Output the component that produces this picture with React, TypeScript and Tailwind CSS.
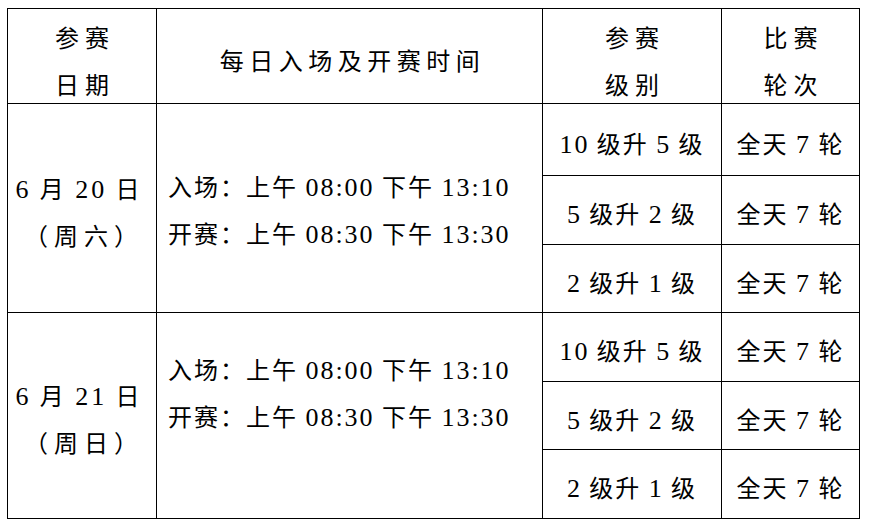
import { ReactNode } from "react";

const days = [
    { date: "6 月 20 日", week: "（周六）", shift: "pb-[0px]" },
    { date: "6 月 21 日", week: "（周日）", shift: "pb-[49px]" },
];

const levels = ["10 级升 5 级", "5 级升 2 级", "2 级升 1 级"];

// digits in Times-like face, a bit larger than the CJK text
function fmt(s: string) {
    return s.split(/([0-9:]+)/).map((part, i) =>
        /^[0-9:]+$/.test(part) ? (
            <span key={i} className="text-[26px] leading-none" style={{ fontFamily: '"Liberation Serif", serif' }}>
                {part}
            </span>
        ) : (
            <span key={i}>{part}</span>
        )
    );
}

function Cell({ children, className = "" }: { children: ReactNode; className?: string }) {
    return <div className={"bg-white flex flex-col justify-center " + className}>{children}</div>;
}

export default function App() {
    return (
        <div
            className="w-[869px] h-[526px] bg-white text-black pl-[7px] pt-[8px]"
            style={{ fontFamily: '"Noto Sans CJK SC", "Liberation Serif", serif' }}
        >
            <div className="inline-grid bg-black gap-px p-px grid-cols-[148px_385px_178px_137px] grid-rows-[94px_71px_68px_67px_68px_67px_68px] text-[24px] leading-[47px]">
                {/* header */}
                <Cell className="items-center pt-[7px] tracking-[6px] pl-[6px]">
                    <div>参赛</div>
                    <div>日期</div>
                </Cell>
                <Cell className="items-center pt-[7px] tracking-[5.5px] pl-[6px]">
                    <div>每日入场及开赛时间</div>
                </Cell>
                <Cell className="items-center pt-[7px] tracking-[6px] pl-[6px]">
                    <div>参赛</div>
                    <div>级别</div>
                </Cell>
                <Cell className="items-center pt-[7px] tracking-[6px] pl-[6px]">
                    <div>比赛</div>
                    <div>轮次</div>
                </Cell>

                {days.map((d, i) => (
                    <DayRows key={i} date={d.date} week={d.week} shift={d.shift} />
                ))}
            </div>
        </div>
    );
}

function DayRows({ date, week, shift }: { date: string; week: string; shift: string }) {
    return (
        <>
            <Cell className="row-span-3 items-center pt-[5px] pr-[6px]">
                <div className="whitespace-nowrap tracking-[3px]">{fmt(date)}</div>
                <div className="whitespace-nowrap tracking-[6px] pl-[10px]">{week}</div>
            </Cell>
            <Cell className={"row-span-3 pl-[11px] pt-[2px] tracking-[2px] " + shift}>
                <div className="whitespace-nowrap">{fmt("入场：上午 08:00 下午 13:10")}</div>
                <div className="whitespace-nowrap">{fmt("开赛：上午 08:30 下午 13:30")}</div>
            </Cell>
            {levels.map((lv, j) => (
                <LevelRow key={j} level={lv} />
            ))}
        </>
    );
}

function LevelRow({ level }: { level: string }) {
    return (
        <>
            <Cell className="items-center pt-[5px] tracking-[2px]">
                <div className="whitespace-nowrap">{fmt(level)}</div>
            </Cell>
            <Cell className="items-center pt-[5px] tracking-[2px]">
                <div className="whitespace-nowrap">{fmt("全天 7 轮")}</div>
            </Cell>
        </>
    );
}
